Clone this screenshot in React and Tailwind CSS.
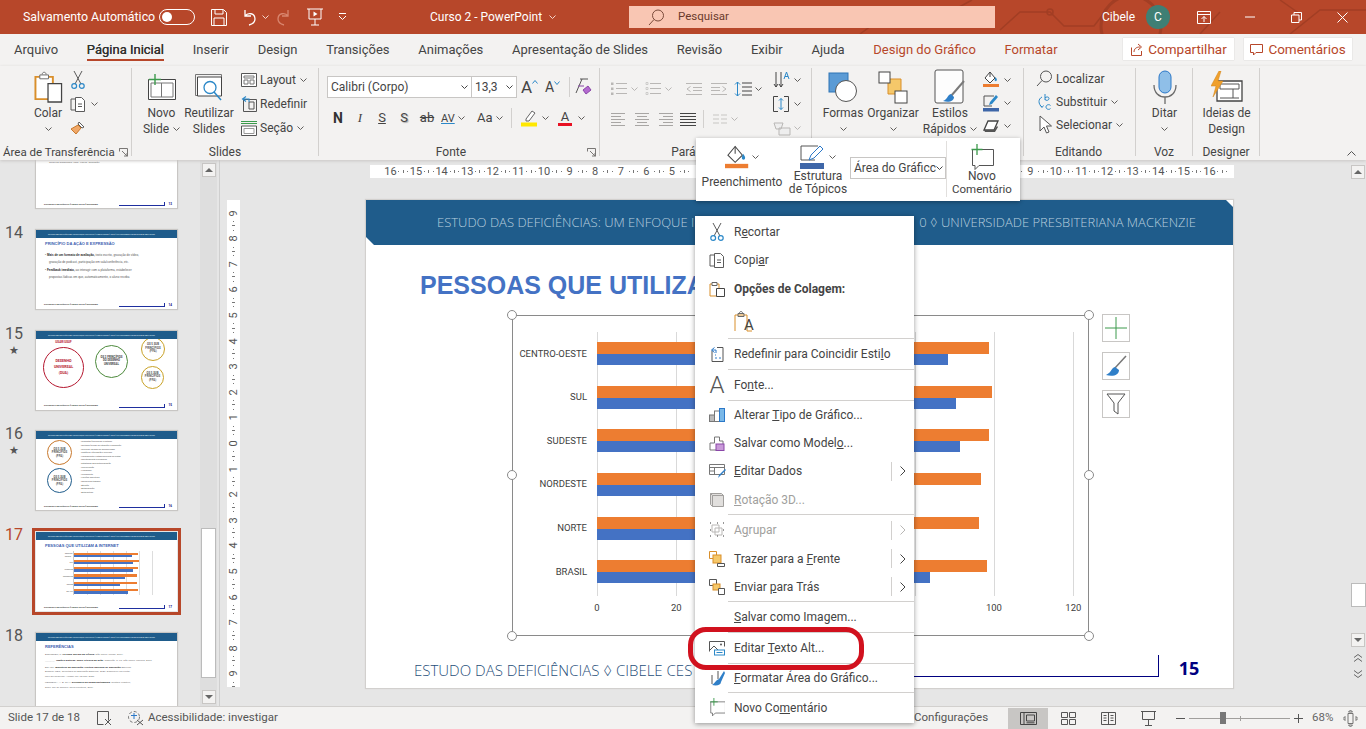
import React from 'react';

const Chev = ({ c = '#605e5c', className = '' }) => (
  <svg width="7" height="4" viewBox="0 0 7 4" className={`flex-none ${className}`}><path d="M.5.5l3 3 3-3" fill="none" stroke={c} /></svg>
);
const Svg = ({ w, h, children, className = '' }) => (
  <svg width={w} height={h} viewBox={`0 0 ${w} ${h}`} fill="none" className={`flex-none ${className}`}>{children}</svg>
);
const DK = '#5b5b5b';

const Scissors = () => <Svg w={14} h={20}><path d="M3 1l7 13M11 1L4 14" stroke={DK} /><circle cx="3.2" cy="16" r="2.4" stroke="#2b88c8" strokeWidth="1.2" /><circle cx="10.8" cy="16" r="2.4" stroke="#2b88c8" strokeWidth="1.2" /></Svg>;
const CopyI = () => <Svg w={16} h={17}><path d="M5 3H1v11h4" stroke={DK} /><path d="M5.5 1.5h6l3 3v11h-9z" fill="#fff" stroke={DK} /><path d="M8 8h4M8 10.5h4" stroke={DK} /></Svg>;
const BrushI = () => <Svg w={16} h={16}><path d="M9 2l5 5-2 1-4-4z" fill="#fff" stroke={DK} /><path d="M8 5l3 3-5 6-5-5z" fill="#f0a868" stroke="#c8782c" /></Svg>;
const Launcher = () => <Svg w={9} h={9}><path d="M.5 .5h8v8M.5 .5v3M.5 .5h3M3 3l5 5M5 8h3V5" stroke="#797775" /></Svg>;

const PasteBig = ({ w = 29, h = 33 }) => <svg width={w} height={h} viewBox="0 0 30 33" fill="none"><path d="M1.5 5.5h18v23h-18z" fill="#fff" stroke="#d98f2b" strokeWidth="2" /><path d="M6 3.5h9v4H6z M8.5 3c0-3 4-3 4 0" fill="#fff" stroke="#6b6b6b" /><path d="M14.5 12.5h14v19h-14z" fill="#fff" stroke="#444" strokeWidth="1.3" /></svg>;
const NewSlideI = () => <Svg w={30} h={27}><path d="M1.5 5.5h27v20h-27z" fill="#fff" stroke="#444" /><path d="M4 9h22v14H4z M14.5 9v14" stroke="#777" /><path d="M8 0v11M2 5.5h12" stroke="#3c9a4c" strokeWidth="1.4" /></Svg>;
const ReuseI = () => <Svg w={29} h={27}><path d="M.5.5h26v21H.5z" stroke="#777" /><path d="M2.5 3h24v19h-24z" fill="#fff" stroke="#444" /><circle cx="15" cy="13.500" r="6" fill="#fff" stroke="#2b88c8" strokeWidth="1.3" /><path d="M19 18l7 8" stroke="#2b88c8" strokeWidth="1.5" /></Svg>;
const LayoutI = () => <Svg w={16} h={14}><path d="M.5.5h15v13H.5z" fill="#fff" stroke="#555" /><path d="M3 3h10v2H3zM3 7h4v4H3zM9 7h4v4H9z" stroke="#777" /></Svg>;
const ResetI = () => <Svg w={16} h={16}><path d="M2.5 3.5h13v12h-13zM8 6h5v7H8z" stroke="#555" /><path d="M5 .5L1.5 3 5 5.5M2 3h6v3" stroke="#2b88c8" strokeWidth="1.1" /></Svg>;
const SecaoI = () => <Svg w={16} h={16}><path d="M0 1.5h16M0 3.5h16" stroke="#3c9a4c" /><path d="M.5 6h15v9.5H.5z" fill="#fff" stroke="#555" /><path d="M3 8.5h10v5H3z" stroke="#999" /></Svg>;
const GrowA = ({ up, s = 16 }) => <span className="flex items-start font-normal leading-none text-[#444]" style={{ fontSize: s }}>A<svg width="6" height="4" viewBox="0 0 6 4" className="mt-[1px]"><path d={up ? 'M.5 3.5L3 .5l2.5 3' : 'M.5.5L3 3.5 5.5.5'} stroke="#2b88c8" fill="none" /></svg></span>;
const ClearI = () => <Svg w={18} h={18}><path d="M2 15L8 1M6 1h8" stroke="#555" /><path d="M4 8h6M9 12l5-4 3 4-5 4z" fill="#b36ad0" stroke="#8a46a8" /></Svg>;
const HiliteI = () => <Svg w={18} h={18}><path d="M6 10l6-8 3 2-6 8H6z" fill="#fff" stroke="#666" /><rect x="1" y="13.5" width="16" height="4" fill="#ffe800" /></Svg>;

const ListLines = ({ k = 'bullets' }) => {
  const c = '#b9b7b5';
  return <Svg w={16} h={14}>{[1.5, 6.5, 11.5].map((y) => <path key={y} d={`M5 ${y}h11`} stroke={c} />)}{k === 'bullets' ? [1.5, 6.5, 11.5].map((y) => <rect key={y} x="0" y={y - 1} width="2.5" height="2.5" fill={c} />) : [1.5, 6.5, 11.5].map((y) => <path key={y} d={`M1 ${y - 1}h2v2H1z`} stroke={c} strokeWidth=".6" />)}</Svg>;
};
const IndentI = ({ flip }) => <Svg w={16} h={12} className={flip ? '-scale-x-100' : ''}><path d="M0 .5h16M7 4.5h9M7 7.5h9M0 11.5h16M4.5 3.5L1 6l3.5 2.5" stroke="#b9b7b5" /></Svg>;
const Align = ({ k }) => {
  const r = { l: [14, 10, 14, 10, 14], c: [14, 10, 14, 10, 14], r: [14, 10, 14, 10, 14], j: [16, 16, 16, 16, 16] }[k];
  const c = k === 'j' ? '#444' : '#a8a6a4';
  return <Svg w={16} h={13}>{r.map((w, i) => { const x = k === 'l' || k === 'j' ? 0 : k === 'r' ? 16 - w : (16 - w) / 2; return <path key={i} d={`M${x} ${i * 3 + .5}h${w}`} stroke={c} />; })}</Svg>;
};
const ColsI = () => <Svg w={14} h={10}><path d="M0 1h6M8 1h6M0 5h6M8 5h6M0 9h6M8 9h6" stroke="#c8c6c4" strokeWidth="1.2" /></Svg>;
const LineSp = () => <Svg w={18} h={16}><path d="M8 2h10M8 6h10M8 10h10M8 14h10" stroke="#444" /><path d="M3.5 1v14M1 3.5L3.5 1 6 3.5M1 12.5L3.5 15 6 12.5" stroke="#2b88c8" /></Svg>;
const TxtDir = () => <Svg w={18} h={20}><path d="M3 2v15M1 14l2 3 2-3M8 2v15M6 14l2 3 2-3" stroke="#444" /><path d="M11 9l2.500-7 2.500 7M12 6.500h3" stroke="#2b88c8" /></Svg>;
const AlignTxt = () => <Svg w={16} h={16}><path d="M5 .5H.5v15H5M11 .5h4.5v15H11" stroke="#444" /><path d="M8 2.5v11M6 4.5l2-2 2 2M6 11.5l2 2 2-2" stroke="#2b88c8" /></Svg>;
const SmartArt = () => <Svg w={18} h={16}><path d="M1 3h9l-2 6H3zM6 8h11v7H6z" fill="#eee" stroke="#b9b7b5" /></Svg>;

const Formas = () => <Svg w={30} h={30}><rect x="1" y="1" width="19" height="19" fill="#5b9bd5" stroke="#2e75b6" /><circle cx="18" cy="19" r="10.5" fill="#fff" stroke="#555" /></Svg>;
const Organizar = () => <Svg w={30} h={33}><path d="M10 8h13v15H10z" fill="#f5c86a" stroke="#d98f2b" /><rect x="1" y="1" width="11" height="11" fill="#fff" stroke="#444" /><rect x="17" y="20" width="12" height="12" fill="#fff" stroke="#444" /></Svg>;
const Estilos = () => <Svg w={32} h={36}><rect x="1" y="1" width="28" height="33" rx="2" fill="#fdfdfd" stroke="#555" /><path d="M30 12L17 27" stroke="#7a7a7a" strokeWidth="2" /><path d="M17 25c-4 1-3 5-8 7 6 2 11 0 11-4z" fill="#2f7fc8" /></Svg>;
const FillS = ({ c = '#ed7d31', big }) => <Svg w={big ? 24 : 16} h={big ? 24 : 18}><g transform={big ? 'scale(1.45)' : undefined}><path d="M7 1L2 7l5 5 5-5z" fill="#fff" stroke="#444" strokeWidth={big ? .7 : 1} /><path d="M7 1v5" stroke="#444" strokeWidth={big ? .7 : 1} /><path d="M12.5 6c1 1.5 1.8 2.5 1.2 3.6-.6 1-2 .6-2.1-.6 0-1 .5-2 .9-3z" fill="#2b88c8" /><rect x="0" y="13" width="16" height="3" fill={c} /></g></Svg>;
const PenS = ({ c = '#3e66a8' }) => <Svg w={16} h={18}><path d="M1 2h10M1 2v10h8" stroke="#555" /><path d="M6 11l1-3 6-7 2 2-6 7z" fill="#2b88c8" /><rect x="0" y="14" width="16" height="3.5" fill={c} /></Svg>;
const Effects = () => <Svg w={16} h={16}><path d="M1 12l4-9h10l-4 9z" fill="#fff" stroke="#444" strokeWidth="1.3" /><path d="M1 12l10 0 3 -4 1 1-3 5H2z" fill="#555" /></Svg>;
const SearchI = ({ c = '#555' }) => <Svg w={17} h={17}><circle cx="10" cy="6.5" r="5.5" stroke={c} /><path d="M6 10.5L1 16" stroke={c} /></Svg>;
const ReplaceI = () => <Svg w={17} h={18}><path d="M9 1v6M9 5c1-1.500 4-1.500 4 .5S10 8 9 6.500M14.500 12.500c-1-1.500-4.500-1-4.500 1.500s3.500 3 4.500 1.500" stroke="#2b88c8" /><path d="M6 4C2 6 2 11 6 14M4 12l2 2.5 1.5-2" stroke="#2b88c8" /></Svg>;
const PointerI = () => <Svg w={14} h={20}><path d="M2 1v15l4-4 2.5 6 2.5-1-2.5-6h5z" fill="#fff" stroke="#555" /></Svg>;
const Mic = () => <Svg w={24} h={34}><rect x="6" y="1" width="12" height="22" rx="6" fill="#8fbfe8" stroke="#2b78c8" /><path d="M1 15c0 8 5 12 11 12s11-4 11-12M12 27v7" stroke="#6b6b6b" strokeWidth="1.3" /></Svg>;
const Ideas = () => <Svg w={32} h={32}><path d="M6 10h25v20H6z" fill="#fff" stroke="#444" strokeWidth="1.3" /><path d="M9 13h19v5H9zM22 18v9M9 27h19" stroke="#555" /><path d="M8 0L0 15h5L2 26 12 10H7l3-10z" fill="#f0a02c" stroke="#d08418" strokeWidth=".5" /></Svg>;

const ShareI = () => <Svg w={13} h={13}><path d="M1.5 4.5v8h10V8" stroke="#b7472a" /><path d="M4 9c0-3 2-5 6-5M8 1l3.5 3L8 7" stroke="#b7472a" /></Svg>;
const CommentI = ({ c = '#b7472a' }) => <Svg w={13} h={13}><path d="M.5 1.5h12v8H6l-2.5 2.5V9.5H.5z" stroke={c} /></Svg>;
const NewComment = ({ s = 1 }) => <svg width={24 * s} height={26 * s} viewBox="0 0 24 26" fill="none"><path d="M2.5 5.5h21v16H9l-4 4v-4H2.500z" fill="#fff" stroke="#555" /><path d="M7 0v11M1.500 5.500h11" stroke="#3c9a4c" strokeWidth="1.3" /></svg>;

const Large = ({ w, icon, l1, l2, chev, className = '' }) => (
  <div className={`flex flex-col items-center flex-none ${className}`} style={{ width: w }}>
    <div className="h-[38px] flex items-center justify-center">{icon}</div>
    <div className="h-[15.5px] leading-[15.5px] whitespace-nowrap">{l1}</div>
    <div className="h-[15.5px] leading-[15.5px] whitespace-nowrap flex items-center justify-center gap-[4px]">{l2}{chev && <Chev />}</div>
  </div>
);
const Group = ({ w, label, launcher, labelCls = '', children, bodyCls = '' }) => (
  <div className="flex flex-col flex-none border-r border-[#d2d0ce] h-[88px]" style={{ width: w }}>
    <div className={`flex-1 flex min-h-0 ${bodyCls}`}>{children}</div>
    <div className={`relative h-[16px] leading-[24px] text-center whitespace-nowrap ${labelCls}`}>
      {label}
      {launcher && <span className="absolute right-[3px] top-[8px] flex"><Launcher /></span>}
    </div>
  </div>
);
const Small = ({ icon, children, chev, h = 'h-[24px]' }) => (
  <div className={`flex items-center ${h}`}>
    <span className="w-[19px] flex justify-center flex-none">{icon}</span>
    <span className="ml-[2px] whitespace-nowrap">{children}</span>
    {chev && <Chev className="ml-[4px]" />}
  </div>
);

const Tab = ({ children, active, red }) => (
  <div className={`relative h-[32px] leading-[31px] whitespace-nowrap ${red ? 'text-[#b7472a]' : active ? 'text-[#323130] [text-shadow:0_0_.3px_#323130]' : 'text-[#444]'}`}>
    {children}
    {active && <span className="absolute left-0 right-0 top-[25px] h-[2px] bg-[#b7472a]" />}
  </div>
);

const TitleBar = () => (
  <div className="relative h-[34px] flex-none bg-[#b7472a] text-white text-[12.400px] flex items-center">
    <svg width="1366" height="34" className="absolute left-0 top-0" fill="none" stroke="#a23e24" strokeWidth="1.5">
      <path d="M1000 30l20-18h30l14 14h30l20 -26M860 34l30-22h60l22-12M1290 34l30-24h46M1200 34l20-22M1280 0l20 14" />
      <circle cx="1131" cy="26" r="30" strokeWidth="3" />
      <circle cx="1050" cy="12" r="3" />
    </svg>
    <span className="relative ml-[23px] w-[136px] whitespace-nowrap">Salvamento Automático</span>
    <span className="relative w-[36px] h-[16px] border border-white rounded-full flex items-center pl-[2px] flex-none"><span className="w-[10px] h-[10px] bg-white rounded-full" /></span>
    <span className="relative ml-[16px]"><Svg w={16} h={17}><path d="M.5.5h12l3 3v13H.5z M4 1v4h8V1 M3 16.500V9h10v7.500" stroke="#fff" /></Svg></span>
    <span className="relative ml-[15px]"><Svg w={14} h={17}><path d="M3 1v6h6M3 7c3-4 10-3 10 3 0 3-2 5-6 6" stroke="#fff" strokeWidth="1.3" /></Svg></span>
    <Chev c="#f4d6cc" className="relative ml-[6px]" />
    <span className="relative ml-[8px]"><Svg w={18} h={17}><path d="M11 1v6h-6M11 7C8 3 1 4 1 10c0 3 2 5 6 6" stroke="#d9866f" strokeWidth="1.3" /></Svg></span>
    <span className="relative ml-[12px]"><Svg w={16} h={18}><path d="M0 1h16M2 1v10h12V1M8 11v6M4 17h8" stroke="#fff" /><path d="M6.500 3.500l4 2.500-4 2.500z" fill="#fff" /></Svg></span>
    <span className="relative ml-[15px]"><Svg w={9} h={8}><path d="M1 .5h7M1 3l3.500 3.500L8 3" stroke="#fff" /></Svg></span>
    <span className="relative ml-[83px] w-[119px] whitespace-nowrap text-[12px]">Curso 2 - PowerPoint</span>
    <Chev c="#f4d6cc" />
    <div className="relative ml-[73px] w-[366px] h-[22px] bg-[#f9c6b3] flex items-center pl-[19px] text-[#6a3a2c] flex-none text-[11.500px]">
      <SearchI c="#7a4a3a" />
      <span className="ml-[13px]">Pesquisar</span>
    </div>
    <span className="relative ml-[107px] w-[33px] whitespace-nowrap text-[12px]">Cibele</span>
    <span className="relative ml-[11px] w-[24px] h-[24px] rounded-full bg-[#3f7f74] flex items-center justify-center text-[12px] flex-none">C</span>
    <span className="relative ml-[27px]"><Svg w={14} h={13}><path d="M.5.5h13v12H.5zM.5 3.500h13M7 11V5.500M4.500 8L7 5.500 9.500 8" stroke="#fff" /></Svg></span>
    <span className="relative ml-[34px]"><Svg w={10} h={2}><path d="M0 1h10" stroke="#fff" /></Svg></span>
    <span className="relative ml-[36px]"><Svg w={11} h={11}><path d="M.5 3h7.500v7.500H.5zM3 3V.5h7.500V8H8" stroke="#fff" /></Svg></span>
    <span className="relative ml-[35px]"><Svg w={11} h={11}><path d="M.5.5l10 10M10.500.5L.5 10.500" stroke="#fff" /></Svg></span>
  </div>
);

const Tabs = () => (
  <div className="h-[32px] flex-none bg-[#f3f2f1] flex items-start text-[13px] pl-[14px] gap-[28.700px]">
    <Tab>Arquivo</Tab><Tab active>Página Inicial</Tab><Tab>Inserir</Tab><Tab>Design</Tab><Tab>Transições</Tab><Tab>Animações</Tab><Tab>Apresentação de Slides</Tab><Tab>Revisão</Tab><Tab>Exibir</Tab><Tab>Ajuda</Tab><Tab red>Design do Gráfico</Tab><Tab red>Formatar</Tab>
    <div className="ml-auto flex gap-[10px] pr-[14px] pt-[4px] text-[13.500px]">
      <div className="w-[111px] h-[22px] bg-white flex items-center justify-center gap-[5px] text-[#b7472a] shadow-[0_0_1px_#bbb]"><ShareI />Compartilhar</div>
      <div className="w-[108px] h-[22px] bg-white flex items-center justify-center gap-[5px] text-[#b7472a] shadow-[0_0_1px_#bbb]"><CommentI />Comentários</div>
    </div>
  </div>
);

const Ribbon = () => (
  <div className="relative z-10 h-[94px] flex-none bg-[#f3f2f1] flex pt-[2px] text-[12px] text-[#444] shadow-[0_1px_3px_#c8c6c4]">
    <Group w={132} label="Área de Transferência" launcher labelCls="text-left pl-[3px] text-[11.500px]" bodyCls="pl-[21px]">
      <Large w={54} icon={<PasteBig />} l1="Colar" l2="" chev />
      <div className="flex flex-col items-start -ml-[5px]">
        <div className="h-[24px] flex items-center pl-[1px]"><Scissors /></div>
        <div className="h-[24px] flex items-center gap-[5px]"><CopyI /><Chev /></div>
        <div className="h-[24px] flex items-center"><BrushI /></div>
      </div>
    </Group>
    <Group w={187} label="Slides" bodyCls="pl-[8px]">
      <Large w={43} icon={<NewSlideI />} l1="Novo" l2="Slide" chev />
      <Large w={52} icon={<ReuseI />} l1="Reutilizar" l2="Slides" />
      <div className="ml-[4px] flex flex-col">
        <Small icon={<LayoutI />} chev>Layout</Small>
        <Small icon={<ResetI />}>Redefinir</Small>
        <Small icon={<SecaoI />} chev>Seção</Small>
      </div>
    </Group>
    <Group w={281} label="Fonte" launcher labelCls="pr-[16px]" bodyCls="flex-col pl-[8px] pt-[8px]">
      <div className="h-[22px] flex items-center">
        <div className="w-[145px] h-[22px] bg-white border border-[#c8c6c4] flex items-center justify-between px-[3px] pr-[3px] text-[12px]">Calibri (Corpo)<Chev c="#444" /></div>
        <div className="w-[45px] h-[22px] bg-white border border-l-0 border-[#c8c6c4] flex items-center justify-between px-[3px] text-[12px]">13,3<Chev c="#444" /></div>
        <div className="ml-[4px] w-[24px]"><GrowA up s={17} /></div>
        <div className="w-[20px]"><GrowA s={14} /></div>
        <div className="w-px h-[20px] bg-[#d2d0ce] mx-[4px]" />
        <ClearI />
      </div>
      <div className="h-[26px] mt-[7px] flex items-center text-[13px]">
        <span className="w-[22px] text-center font-bold text-[14px] text-[#333]">N</span>
        <span className="w-[22px] text-center italic [font-family:'Liberation_Serif',serif]">I</span>
        <span className="w-[22px] text-center underline">S</span>
        <span className="w-[22px] text-center [text-shadow:1px_1px_1px_#aaa]">S</span>
        <span className="w-[24px] text-center line-through">ab</span>
        <span className="w-[34px] flex items-center gap-[3px] pl-[2px]"><span className="text-[11px] leading-none underline decoration-[#2b88c8]">AV</span><Chev /></span>
        <span className="w-[38px] flex items-center gap-[3px] pl-[4px]">Aa<Chev /></span>
        <span className="w-px h-[20px] bg-[#d2d0ce]" />
        <span className="w-[36px] pl-[8px] flex items-center gap-[4px]"><HiliteI /><Chev /></span>
        <span className="w-[36px] pl-[10px] flex items-center gap-[6px]"><span className="relative flex flex-col items-center leading-[13px]">A<span className="block w-[14px] h-[3px] bg-[#e81123]" /></span><Chev /></span>
      </div>
    </Group>
    <Group w={212} label="Parágrafo" labelCls="pr-[16px]" bodyCls="pl-[11px] pt-[12px]">
      <div className="flex flex-col w-[160px] flex-none">
        <div className="h-[18px] flex items-center">
          <ListLines /><Chev c="#b9b7b5" className="ml-[4px]" />
          <span className="ml-[7px]"><ListLines k="n" /></span><Chev c="#b9b7b5" className="ml-[4px]" />
          <span className="ml-[14px]"><IndentI /></span><span className="ml-[9px]"><IndentI flip /></span>
          <span className="ml-[7px]"><LineSp /></span><Chev className="ml-[3px]" />
        </div>
        <div className="h-[20px] mt-[11px] flex items-center gap-[7px]">
          <Align k="l" /><Align k="c" /><Align k="r" /><Align k="j" />
          <span className="w-px h-[18px] bg-[#d2d0ce]" />
          <span className="flex items-center gap-[4px] ml-[2px]"><ColsI /><Chev c="#b9b7b5" /></span>
        </div>
      </div>
      <div className="-mt-[12px] pl-[2px] flex flex-col">
        <div className="h-[24px] flex items-center gap-[3px]"><TxtDir /><Chev /></div>
        <div className="h-[24px] flex items-center gap-[5px]"><AlignTxt /><Chev /></div>
        <div className="h-[24px] flex items-center gap-[3px]"><SmartArt /><Chev c="#b9b7b5" /></div>
      </div>
    </Group>
    <Group w={212} label="" bodyCls="pl-[8px]">
      <Large w={46} icon={<Formas />} l1="Formas" l2="" chev />
      <Large w={54} icon={<Organizar />} l1="Organizar" l2="" chev />
      <Large w={56} className="ml-[2px]" icon={<Estilos />} l1="Estilos" l2="Rápidos" chev />
      <div className="ml-[4px] flex flex-col pl-[1px]">
        <div className="h-[23px] flex items-center gap-[5px]"><FillS /><Chev /></div>
        <div className="h-[23px] flex items-center gap-[5px]"><PenS /><Chev /></div>
        <div className="h-[23px] flex items-center gap-[5px]"><Effects /><Chev /></div>
      </div>
    </Group>
    <Group w={112} label="Editando" labelCls="pr-[2px]" bodyCls="pl-[11px] flex-col -mt-[1px]">
      <Small h="h-[23px]" icon={<SearchI />}>Localizar</Small>
      <Small h="h-[23px]" icon={<ReplaceI />} chev>Substituir</Small>
      <Small h="h-[23px]" icon={<PointerI />} chev>Selecionar</Small>
    </Group>
    <Group w={57} label="Voz">
      <Large w={57} icon={<Mic />} l1="Ditar" l2="" chev />
    </Group>
    <Group w={67} label="Designer">
      <Large w={67} icon={<Ideas />} l1="Ideias de" l2="Design" />
    </Group>
    <div className="flex-1 flex items-end justify-end pb-[4px] pr-[10px]"><Svg w={9} h={5}><path d="M.5 4.500L4.500.5l4 4" stroke="#555" /></Svg></div>
  </div>
);

/* Thumbnails */
const Thumb = ({ children, active, star, n, top, cutTop, cutBottom }) => (
  <div className={`flex flex-none ${cutTop ? 'h-[48px]' : cutBottom ? 'h-[73px]' : 'h-[79px]'}`}>
    <div className={`w-[36px] flex-none pl-[5px] flex flex-col items-start text-[16px] leading-[18px] -mt-[6px] ${active ? 'text-[#b7472a]' : 'text-[#555]'}`}>
      <span>{n}</span>
      {star && <span className="text-[11px] leading-[12px] pl-[4px] pt-[2px]">★</span>}
    </div>
    <div className={`w-[141px] bg-white flex-none flex flex-col overflow-hidden ${active ? 'outline-[3px] outline-[#b7472a] outline-offset-[1px]' : 'shadow-[0_0_1px_1px_#c8c6c4]'}`}>
      {!cutTop && <div className="h-[8px] flex-none bg-[#1f5c8b] text-[#dbe7f0] text-[1.900px] leading-[8px] pl-[12px] whitespace-nowrap overflow-hidden">ESTUDO DAS DEFICIÊNCIAS: UM ENFOQUE INCLUSIVO ◊ CIBELE CESAR ◊ 2020 ◊ UNIVERSIDADE PRESBITERIANA MACKENZIE</div>}
      <div className="flex-1 min-h-0 overflow-hidden">{children}</div>
      {!cutBottom && (
        <div className="h-[8px] flex-none flex items-center pl-[8px] pr-[5px]">
          <span className="text-[2px] font-bold text-[#333] whitespace-nowrap w-[75px]">ESTUDO DAS DEFICIÊNCIAS ◊ CIBELE CESAR ◊ MACKENZIE</span>
          <span className="ml-[2px] w-[46px] h-[4px] border-b border-r border-[#1f2f9f]" />
          <span className="ml-[4px] text-[3px] font-bold text-[#000080]">{top}</span>
        </div>
      )}
    </div>
  </div>
);
const THead = ({ children }) => <div className="text-[4px] leading-[5px] font-bold text-[#3f62b0] pl-[9px] pt-[3px] whitespace-nowrap [font-family:'Liberation_Sans',sans-serif]">{children}</div>;
const Circ = ({ s, c, children }) => (
  <div className="rounded-full border flex flex-col items-center justify-center text-center text-[2.800px] leading-[3.500px] font-bold flex-none" style={{ width: s, height: s, borderColor: c, color: c, borderWidth: s > 30 ? 1 : .8 }}>{children}</div>
);
const S13 = () => <div className="text-[2.500px] leading-[4px] text-[#444] pl-[13px] pt-[1px] whitespace-nowrap [font-family:'Liberation_Sans',sans-serif]">Conexos quadrinhos, links, vídeos, animação.</div>;
const S14 = () => (
  <div className="[font-family:'Liberation_Sans',sans-serif]">
    <THead>PRINCÍPIO DA AÇÃO E EXPRESSÃO</THead>
    <div className="pl-[9px] pt-[6px] text-[3px] leading-[7px] text-[#555] whitespace-nowrap">
      <div>• <b className="text-[#222]">Mais de um formato de avaliação,</b> texto escrito, gravação de vídeo,</div>
      <div className="pl-[4px]">gravação de podcast, participação em sala/conferência, etc.</div>
      <div className="mt-[1.500px]">• <b className="text-[#222]">Feedback imediato,</b> ao interagir com a plataforma, estabelecer</div>
      <div className="pl-[4px]">propostas lúdicas em que, automaticamente, o aluno receba</div>
    </div>
  </div>
);
const S15 = () => (
  <div className="flex pl-[7px] pt-[1px] h-full">
    <div className="flex flex-col items-center w-[41px] flex-none">
      <span className="text-[3px] leading-[3px] font-bold text-[#b5172f] mt-[1px]">USAR/USUF</span>
      <div className="mt-[3px]"><Circ s={41} c="#b5172f"><span className="text-[3.600px] leading-[6px]">DESENHO<br />UNIVERSAL<br />(DUA)</span></Circ></div>
    </div>
    <div className="ml-[11px] pt-[5px]"><Circ s={33} c="#4d8a3c"><span className="text-[#444]">OS 3 PRINCÍPIOS<br />DO DESENHO<br />UNIVERSAL</span></Circ></div>
    <div className="ml-[13px] flex flex-col gap-[5px] -mt-[3px]">
      <Circ s={24} c="#c9a227"><span className="text-[#555]">OS 5 SUB<br />PRINCÍPIOS<br />(PPA)</span></Circ>
      <Circ s={23} c="#c9a227"><span className="text-[#555]">OS 5 SUB<br />PRINCÍPIOS<br />(PPA)</span></Circ>
    </div>
  </div>
);
const S16 = () => (
  <div className="flex pl-[11px] pt-[1px] h-full">
    <div className="flex flex-col gap-[3px] flex-none">
      <Circ s={25} c="#c8782c"><span className="text-[#555]">OS 5 SUB<br />PRINCÍPIOS<br />(PPA)</span></Circ>
      <Circ s={25} c="#1f5c8b"><span className="text-[#555]">OS 5 SUB<br />PRINCÍPIOS<br />(PPA)</span></Circ>
    </div>
    <div className="ml-[8px] text-[2.100px] leading-[3.600px] text-[#555] whitespace-nowrap">
      {['Respostas fisiológicas e motoras','Múltiplas formas de interação e navegação','Recursos variados de acessibilidade','Gestão de informação e recursos','Planejamento e estabelecimento de metas','Monitoramento e progresso','Estratégias para autorregulação','Comunicação','Linguagem','Pensamento','Funções executivas','Memória de trabalho','Atenção','Autoavaliação','Autocontrole'].map((t) => <div key={t}>◦ {t}</div>)}
    </div>
  </div>
);
const ORANGE = '#ed7d31';
const BLUE = '#4472c4';
const DATA = [
  ['CENTRO-OESTE', 98.750, 88.500],
  ['SUL', 99.500, 90.500],
  ['SUDESTE', 98.750, 91.500],
  ['NORDESTE', 96.750, 78],
  ['NORTE', 96.250, 70],
  ['BRASIL', 98.250, 83.800],
];
const S17 = () => (
  <div className="[font-family:'Liberation_Sans',sans-serif]">
    <THead>PESSOAS QUE UTILIZAM A INTERNET</THead>
    <div className="relative ml-[37px] mt-[3px] w-[78px] h-[44px] border-l border-[#ccc]">
      {[1, 2, 3, 4, 5, 6].map((i) => <span key={i} className="absolute top-0 bottom-0 w-px bg-[#ddd]" style={{ left: i * 13 }} />)}
      {DATA.map(([l, a, b]) => (
        <div key={l} className="relative h-[7.300px] flex flex-col justify-center">
          <span className="absolute right-[100%] mr-[1px] text-[1.800px] text-[#555]">{l}</span>
          <div className="relative h-[2.300px]" style={{ width: a * 0.65, background: ORANGE }} />
          <div className="relative h-[2.300px]" style={{ width: b * 0.65, background: BLUE }} />
        </div>
      ))}
    </div>
  </div>
);
const S18 = () => (
  <div className="[font-family:'Liberation_Sans',sans-serif]">
    <THead>REFERÊNCIAS</THead>
    <div className="pl-[9px] pt-[4px] text-[2.500px] leading-[4.500px] text-[#666] whitespace-nowrap">
      <div className="mb-[2px]">BOURDIEU, P. <b className="text-[#222]">Os usos sociais da ciência.</b> São Paulo: Unesp, 2004.</div>
      <div className="mb-[2px]">_______. <b className="text-[#222]">Razões práticas: sobre a teoria da ação.</b> Tradução. 8. ed. São Paulo: Papirus, 2007.</div>
      <div>BRASIL. <b className="text-[#222]">Ministério da Educação. Política Nacional de Educação</b> Especial.</div>
      <div>Brasília: MEC, Secretaria de Educação Especial, 2020. Disponível em portal.</div>
      <div className="mb-[2px]">mec.gov.br/seesp. Acesso em: 12 mar. 2021.</div>
      <div>FERREIRA, A. B. de H. <b className="text-[#222]">Dicionário da língua portuguesa.</b> Curitiba: Positivo,</div>
      <div>2010. Rio de Janeiro: Nova Fronteira, 2019.</div>
    </div>
  </div>
);

const Thumbnails = () => (
  <div className="w-[200px] flex-none overflow-hidden">
    <div className="flex flex-col gap-[21.800px]">
      <Thumb cutTop top="13"><S13 /></Thumb>
      <Thumb n="14" top="14"><S14 /></Thumb>
      <Thumb n="15" star top="15"><S15 /></Thumb>
      <Thumb n="16" star top="16"><S16 /></Thumb>
      <Thumb n="17" active top="17"><S17 /></Thumb>
      <Thumb n="18" cutBottom top="18"><S18 /></Thumb>
    </div>
  </div>
);

const ArrBtn = ({ up, className = '' }) => (
  <div className={`w-[14px] h-[14px] flex items-center justify-center bg-[#f3f2f1] border border-[#c8c6c4] flex-none ${className}`}>
    <span className={`w-0 h-0 border-x-[4px] border-x-transparent ${up ? 'border-b-[4px] border-b-[#666]' : 'border-t-[4px] border-t-[#666]'}`} />
  </div>
);

const ThumbScroll = () => (
  <div className="w-[17px] flex-none bg-[#dedede] flex flex-col items-center pt-[3px]">
    <ArrBtn up />
    <div className="w-[15px] h-[150px] bg-white border border-[#bbb] mt-[351px]" />
    <ArrBtn className="mt-[12px]" />
  </div>
);

const TICK = 'flex-1 flex items-center justify-center';
const HRuler = () => {
  /* Numbers from 4 to the left through 8 to the right lie behind the floating toolbar. */
  const nums = [16,15,14,13,12,11,10,9,8,7,6,5,'','','','','','','','','','','','','',9,10,11,12,13,14,15,16];
  return (
    <div className="ml-[150px] mt-[5px] w-[864px] h-[13px] bg-white flex pl-[14px] overflow-hidden flex-none">
      {nums.map((n, i) => (
        <div key={i} className="w-[25.600px] flex-none flex items-center">
          <span className="w-[12.800px] text-center text-[11px] leading-none text-[#555]">{n}</span>
          <span className={TICK}><i className="block w-px h-px bg-[#777]" /></span>
          <span className={TICK}><i className="block w-px h-[3px] bg-[#777]" /></span>
          <span className={TICK}><i className="block w-px h-px bg-[#777]" /></span>
        </div>
      ))}
    </div>
  );
};
const VRuler = () => {
  const nums = [9,8,7,6,5,4,3,2,1,0,1,2,3,4,5,6,7,8,9];
  return (
    <div className="w-[13px] h-[487px] bg-white flex flex-col pt-[6.600px] overflow-hidden flex-none">
      {nums.map((n, i) => (
        <div key={i} className="h-[25.600px] flex-none flex flex-col items-center">
          <span className="h-[12.800px] flex items-center justify-center text-[11px] leading-none text-[#555] -rotate-90">{n}</span>
          <span className={TICK}><i className="block w-px h-px bg-[#777]" /></span>
          <span className={TICK}><i className="block h-px w-[3px] bg-[#777]" /></span>
          <span className={TICK}><i className="block w-px h-px bg-[#777]" /></span>
        </div>
      ))}
    </div>
  );
};

const Handle = ({ className }) => <span className={`absolute w-[10px] h-[10px] rounded-full bg-white border-[1.500px] border-[#8a8a8a] ${className}`} />;
const ChartBtn = ({ children }) => <div className="w-[28px] h-[28px] bg-white border border-[#c8c6c4] flex items-center justify-center">{children}</div>;

const Chart = () => (
  <div className="relative ml-[146px] mt-[15px] w-[577px] h-[321px] border border-[#8a8a8a] flex-none text-[9.500px] text-[#404040]">
    <Handle className="-left-[6px] -top-[6px]" /><Handle className="-right-[6px] -top-[6px]" />
    <Handle className="-left-[6px] top-[154px]" /><Handle className="-right-[6px] top-[154px]" />
    <Handle className="-left-[6px] -bottom-[6px]" /><Handle className="-right-[6px] -bottom-[6px]" />
    <div className="relative ml-[84px] mt-[16px] h-[262px] w-[477px]">
      {[0, 1, 2, 3, 4, 5, 6].map((i) => (
        <span key={i} className="absolute top-0 -bottom-[2px] w-px bg-[#d9d9d9]" style={{ left: i * 79.4 }} />
      ))}
      {DATA.map(([l, a, b]) => (
        <div key={l} className="relative h-[43.600px] flex flex-col justify-center">
          <span className="absolute right-full mr-[10px] whitespace-nowrap">{l}</span>
          <div className="relative h-[12px]" style={{ width: a * 3.97, background: ORANGE }} />
          <div className="relative h-[11px]" style={{ width: b * 3.97, background: BLUE }} />
        </div>
      ))}
    </div>
    <div className="flex ml-[44.300px] mt-[7px]">
      {['0', '20', '', '', '', '100', '120'].map((v, i) => <span key={i} className="w-[79.400px] flex-none text-center h-[14px]">{v}</span>)}
    </div>
    <div className="absolute left-[calc(100%+14px)] top-[-2px] flex flex-col gap-[10px]">
      <ChartBtn><Svg w={22} h={22}><path d="M11 0v22M0 11h22" stroke="#3c9a4c" /></Svg></ChartBtn>
      <ChartBtn><Svg w={22} h={22}><path d="M21 1L10 13" stroke="#777" strokeWidth="1.500" /><path d="M10 12c-4 1-3 5-9 8 7 2 13 0 13-5z" fill="#2f7fc8" /></Svg></ChartBtn>
      <ChartBtn><Svg w={20} h={22}><path d="M1 1h18l-7 9v11l-4-3v-8z" stroke="#555" /></Svg></ChartBtn>
    </div>
  </div>
);

const Slide = () => (
  <div className="ml-[126px] w-[867px] h-[488px] bg-white flex-none flex flex-col shadow-[0_0_1px_1px_#d2d0ce]">
    <div className="h-[45px] flex-none bg-[#1f5c8b] text-[#b9cfdf] text-[13px] font-light [font-family:'Open_Sans',sans-serif] flex items-center justify-between pl-[71px] pr-[37px] whitespace-nowrap [clip-path:polygon(0_0,calc(100%-7px)_0,100%_7px,100%_100%,8px_100%,0_calc(100%-8px))]">
      <span>ESTUDO DAS DEFICIÊNCIAS: UM ENFOQUE I</span>
      <span>0 ◊ UNIVERSIDADE PRESBITERIANA MACKENZIE</span>
    </div>
    <div className="mt-[25px] pl-[54px] h-[30px] leading-[30px] text-[25px] font-bold text-[#4472c4] [font-family:'Liberation_Sans',sans-serif] whitespace-nowrap">PESSOAS QUE UTILIZA</div>
    <Chart />
    <div className="mt-[19px] h-[22px] flex items-end flex-none">
      <span className="pl-[48px] w-[330px] text-[15px] leading-[20px] font-light text-[#1f4e79] [font-family:'Open_Sans',sans-serif] whitespace-nowrap translate-y-[3px]">ESTUDO DAS DEFICIÊNCIAS ◊ CIBELE CES</span>
      <span className="flex-1 h-[22px] border-b border-r border-[#000080]" />
      <span className="w-[74px] pr-[14px] text-center font-bold text-[18px] leading-[24px] text-[#000080] [font-family:'Open_Sans',sans-serif] translate-y-[3px]">15</span>
    </div>
  </div>
);

const MainScroll = () => (
  <div className="w-[16px] flex-none flex flex-col items-center bg-[#e6e6e6] pt-[5px] text-[#666]">
    <ArrBtn up />
    <div className="w-[15px] h-[24px] bg-white border border-[#bbb] mt-[404px]" />
    <ArrBtn className="mt-[26px]" />
    <div className="mt-[7px] flex flex-col gap-[8px]">
      <Svg w={10} h={8}><path d="M1 3.500L5 .5l4 3M1 7.500l4-3 4 3" stroke="#666" /></Svg>
      <Svg w={10} h={8}><path d="M1 .5l4 3 4-3M1 4.500l4 3 4-3" stroke="#666" /></Svg>
    </div>
  </div>
);

const Editing = () => (
  <div className="flex-1 flex min-w-0 border-l border-[#cfcfcf] ml-[2px]">
    <div className="flex-1 min-w-0 flex flex-col">
      <HRuler />
      <div className="mt-[22px] pl-[7px] flex">
        <VRuler />
        <Slide />
      </div>
    </div>
    <MainScroll />
  </div>
);

const Mid = () => (
  <div className="flex-1 min-h-0 flex bg-[#e6e6e6]">
    <Thumbnails />
    <ThumbScroll />
    <Editing />
  </div>
);

const ViewBtn = ({ active, children, w = 'w-[40px]' }) => <div className={`${w} h-[21px] flex items-center justify-center flex-none ${active ? 'bg-[#c8c6c4]' : ''}`}>{children}</div>;
const Status = () => (
  <div className="h-[23px] flex-none bg-[#f3f2f1] border-t border-[#d2d0ce] flex items-center text-[11.500px] text-[#555]">
    <span className="ml-[8px] w-[71px] whitespace-nowrap">Slide 17 de 18</span>
    <span className="ml-[18px]"><Svg w={15} h={15}><path d="M.5.5h11v9M.5.5v13h6" stroke="#555" /><path d="M8 8l6 6M14 8l-6 6" stroke="#555" /></Svg></span>
    <span className="ml-[15px]"><Svg w={17} h={16}><circle cx="7" cy="7" r="5.500" stroke="#777" strokeDasharray="3 2" /><path d="M7 3v6M4 5.500h6" stroke="#2b78c8" /><path d="M10 10l6 5M16 10l-6 5" stroke="#555" /></Svg></span>
    <span className="ml-[4px] w-[129px] whitespace-nowrap">Acessibilidade: investigar</span>
    <span className="ml-[637px] w-[94px] whitespace-nowrap">Configurações</span>
    <ViewBtn active><Svg w={17} h={13}><path d="M.5.5h16v12H.5zM4 .5v12M6.500 3h8v6h-8zM6.500 10.800h8" stroke="#444" /></Svg></ViewBtn>
    <ViewBtn><Svg w={15} h={13}><path d="M.5.5h6v5h-6zM8.500.5h6v5h-6zM.5 7.500h6v5h-6zM8.500 7.500h6v5h-6z" stroke="#555" /></Svg></ViewBtn>
    <ViewBtn><Svg w={15} h={13}><path d="M.5.5h14v12H.5zM7.500.5v12M2.500 3.500h3M2.500 6h3M2.500 8.500h3M9.500 3.500h3M9.500 6h3M9.500 8.500h3" stroke="#555" /></Svg></ViewBtn>
    <ViewBtn><Svg w={15} h={15}><path d="M0 .5h15M1.500.5v8h12v-8M7.500 8.500V14M4 14.500h7" stroke="#555" /></Svg></ViewBtn>
    <span className="ml-[8px] w-[9px] h-px bg-[#555]" />
    <div className="relative ml-[4px] w-[101px] h-px bg-[#a19f9d] flex items-center">
      <span className="absolute left-[31px] w-[6px] h-[12px] bg-[#777]" />
      <span className="absolute left-[51px] w-px h-[5px] bg-[#a19f9d]" />
    </div>
    <span className="ml-[4px]"><Svg w={9} h={9}><path d="M4.500 0v9M0 4.500h9" stroke="#555" /></Svg></span>
    <span className="ml-[9px] text-[#666]">68%</span>
    <span className="ml-[10px]"><Svg w={15} h={17}><path d="M5 3.500h5v10H5zM7.500 0L5.500 2h4zM7.500 17l-2-2h4zM0 8.500l2-2v4zM15 8.500l-2-2v4z" stroke="#555" strokeWidth=".8" /></Svg></span>
  </div>
);

const MiniToolbar = () => (
  <div className="absolute z-20 left-[696px] top-[138px] w-[324px] h-[63px] bg-white shadow-[0_1px_4px_rgba(0,0,0,.35)] flex text-[12px] text-[#444]">
    <div className="w-[92px] flex flex-col items-center flex-none pt-[7px]">
      <div className="h-[24px] flex items-center gap-[3px]"><FillS big /><Chev /></div>
      <span className="mt-[6px] leading-[15px] whitespace-nowrap">Preenchimento</span>
    </div>
    <div className="w-[60px] flex flex-col items-center flex-none pt-[7px]">
      <div className="h-[24px] flex items-center gap-[3px]"><Svg w={26} h={24}><path d="M1 1h17M1 1v14h14" stroke="#555" /><path d="M9 15l2-5L20 1l3 3-9 9z" fill="#fff" stroke="#2b78c8" /><rect x="0" y="18" width="24" height="6" fill="#3e66a8" /></Svg><Chev /></div>
      <span className="mt-[1px] leading-[13px] whitespace-nowrap">Estrutura</span>
      <span className="leading-[13px] whitespace-nowrap">de Tópicos</span>
    </div>
    <div className="ml-[2px] mt-[19px] w-[96px] h-[22px] border border-[#c8c6c4] flex items-center justify-between pl-[3px] pr-[2px] flex-none">
      <span className="whitespace-nowrap">Área do Gráficc</span><Chev c="#444" />
    </div>
    <div className="w-px h-[56px] mt-[3px] bg-[#e1dfdd] flex-none" />
    <div className="w-[70px] flex flex-col items-center flex-none pt-[7px]">
      <div className="h-[24px] flex items-center"><NewComment /></div>
      <span className="mt-[1px] leading-[13px] whitespace-nowrap">Novo</span>
      <span className="leading-[13px] whitespace-nowrap text-[11.500px]">Comentário</span>
    </div>
  </div>
);

const Sep = () => <div className="h-px ml-[33px] bg-[#d2d0ce] flex-none" />;
const Item = ({ h = 28, icon, children, arrow, disabled, bold }) => (
  <div className={`flex items-center flex-none ${disabled ? 'text-[#a19f9d]' : 'text-[#444]'}`} style={{ height: h }}>
    <span className="w-[39px] pl-[5px] flex items-center justify-center flex-none">{icon}</span>
    <span className={`whitespace-nowrap ${bold ? 'font-bold' : ''}`}>{children}</span>
    {arrow && <span className="ml-auto w-[23px] h-[19px] border-l border-[#d2d0ce] flex items-center justify-center"><Svg w={6} h={10}><path d="M.5.5l4.500 4.500L.5 9.500" stroke={disabled ? '#b9b7b5' : '#444'} /></Svg></span>}
  </div>
);
const M = {
  pasteA: <span className="relative flex"><Svg w={20} h={21}><path d="M1 4h12v16h5M1 4v16" stroke="#d98f2b" /><path d="M4 2.500h6v3H4zM5.500 2c0-2 3-2 3 0" stroke="#6b6b6b" /></Svg><span className="absolute left-[10px] top-[6px] text-[15px] leading-[16px] text-[#444]">A</span></span>,
  reset: <Svg w={14} h={15}><path d="M2 3.500v11h11V.5H7" stroke="#555" /><path d="M4.500.5L1.500 3l3 2.500M2 3h4v3M5 11h2M9 11h2M5 8h1" stroke="#2b78c8" /></Svg>,
  chart: <Svg w={16} h={14}><rect x=".5" y="7" width="5" height="6.500" fill="#bbb" stroke="#777" /><rect x="5.500" y="3" width="5" height="10.500" fill="#fff" stroke="#777" /><rect x="10.500" y=".5" width="5" height="13" fill="#7ab8e8" stroke="#2b78c8" /></Svg>,
  save: <Svg w={16} h={15}><path d="M5.500 1h5v4H14v9H1V7h4.500z" fill="#fff" stroke="#777" /><rect x="7" y="8" width="8" height="6.500" fill="#c89ad8" stroke="#8a46a8" /></Svg>,
  data: <Svg w={17} h={15}><path d="M.5.5h15v10H.5zM.5 3.500h15M5.500 3.500v7M.5 7h5" stroke="#777" /><path d="M9 14l1-3 6-6 1 1-6 6z" fill="#2f7fc8" /></Svg>,
  rot: <Svg w={14} h={14}><path d="M.5.5h11l2 2v11h-11l-2-2z" fill="#e1dfdd" stroke="#a19f9d" /><path d="M.5.500l2 2h11M2.500 2.500v11" stroke="#a19f9d" /></Svg>,
  group: <Svg w={16} h={16}><path d="M3 3h7v7H3zM6 6h7v7H6z" stroke="#b9b7b5" /><path d="M1 1h1M8 1h1M14 1h1M1 8h1M14 8h1M1 14h1M8 14h1M14 14h1" stroke="#777" strokeWidth="1.500" /></Svg>,
  front: <Svg w={16} h={16}><path d="M.5.5h7v7h-7z" stroke="#d98f2b" /><rect x="4" y="4" width="8" height="8" fill="#f5c86a" stroke="#d98f2b" /><path d="M8.500 12.500h7v3h-7z" stroke="#555" /></Svg>,
  back: <Svg w={16} h={16}><path d="M.5.5h7v6h-7z" stroke="#555" /><rect x="4" y="5" width="7" height="6" fill="#f5c86a" stroke="#d98f2b" /><path d="M9.500 9.500h6v6h-6z" fill="#fff" stroke="#555" /></Svg>,
  alt: <Svg w={16} h={15}><path d="M.5 10.500V.5h15v5" stroke="#555" /><path d="M1 9l4-4 4 4" stroke="#555" /><circle cx="12" cy="3.500" r="1" fill="#555" /><rect x="5.500" y="9" width="10" height="5" fill="#fff" stroke="#2b88c8" /><path d="M7.500 11.500h6" stroke="#2b88c8" /></Svg>,
  fmt: <Svg w={16} h={16}><path d="M3 14V5M9 9V1" stroke="#555" /><path d="M15 1l-5 8c-3 1-3 3-7 6 5 1 9 0 9-3l4-9z" fill="#2f7fc8" /></Svg>,
};
const Menu = () => (
  <div className="absolute z-20 left-[695px] top-[216px] w-[219px] h-[507px] bg-white shadow-[0_1px_5px_rgba(0,0,0,.4)] flex flex-col text-[12px] pt-[2px]">
    <Item icon={<Scissors />}>R<u>e</u>cortar</Item>
    <Item icon={<CopyI />}>Copi<u>a</u>r</Item>
    <Item h={30} bold icon={<span className="flex"><Svg w={16} h={16}><path d="M1 3h9v12H1z" stroke="#d98f2b" /><path d="M3 1.500h5v3H3z" fill="#fff" stroke="#666" /><path d="M7.500 7.500h8v8h-8z" fill="#fff" stroke="#444" /></Svg></span>}>Opções de Colagem:</Item>
    <div className="h-[34px] flex items-center pl-[39px] flex-none">{M.pasteA}</div>
    <Sep />
    <Item h={30} icon={M.reset}>Redefinir para Coincidir Esti<u>l</u>o</Item>
    <Sep />
    <Item h={30} icon={<span className="text-[24px] leading-none text-[#555] font-light">A</span>}>Fo<u>n</u>te...</Item>
    <Sep />
    <Item icon={M.chart}>Alterar <u>T</u>ipo de Gráfico...</Item>
    <Item icon={M.save}>Salvar como Model<u>o</u>...</Item>
    <Item icon={M.data} arrow><u>E</u>ditar Dados</Item>
    <Item h={29} disabled icon={M.rot}><u>R</u>otação 3D...</Item>
    <Sep />
    <Item h={30} disabled arrow icon={M.group}>A<u>g</u>rupar</Item>
    <Item h={27} arrow icon={M.front}>Trazer para a <u>F</u>rente</Item>
    <Item h={29} arrow icon={M.back}>Enviar <u>p</u>ara Trás</Item>
    <Sep />
    <Item h={30} icon={null}><u>S</u>alvar como Imagem...</Item>
    <Sep />
    <Item h={30} icon={M.alt}>Editar <u>T</u>exto Alt...</Item>
    <Sep />
    <Item h={28} icon={M.fmt}><u>F</u>ormatar Área do Gráfico...</Item>
    <Sep />
    <Item h={29} icon={<NewComment s={0.7} />}>Novo Co<u>m</u>entário</Item>
  </div>
);

export default function App() {
  return (
    <div className="relative w-[1366px] h-[729px] overflow-hidden flex flex-col [font-family:Roboto,sans-serif] bg-[#e6e6e6]">
      <TitleBar />
      <Tabs />
      <Ribbon />
      <Mid />
      <Status />
      <MiniToolbar />
      <Menu />
      <div className="absolute z-30 left-[688px] top-[627px] w-[176px] h-[43px] border-[5px] border-[#d1111e] rounded-[18px]" />
    </div>
  );
}
